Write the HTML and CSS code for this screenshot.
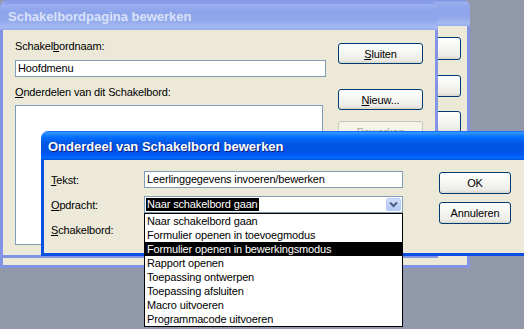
FILE: index.html
```html
<!DOCTYPE html>
<html lang="nl">
<head>
    <meta charset="UTF-8">
    <title>Schakelbordpagina bewerken</title>
    <link rel="stylesheet" href="styles.css">
</head>
<body>
    <!-- window behind, only its right edge shows -->
    <div class="window inactive window-back">
        <div class="titlebar"></div>
        <div class="client back-client">
            <button class="btn back-btn b1"></button>
            <button class="btn back-btn b2"></button>
            <button class="btn back-btn b3"></button>
        </div>
    </div>

    <div class="window inactive window-main">
        <div class="titlebar">Schakelbordpagina bewerken</div>
        <div class="client main-client">
            <div class="main-left">
                <label class="lbl name-lbl">Schakel<u>b</u>ordnaam:</label>
                <div class="textbox name-box">Hoofdmenu</div>
                <label class="lbl items-lbl"><u>O</u>nderdelen van dit Schakelbord:</label>
                <div class="listbox"></div>
            </div>
            <div class="main-buttons">
                <button class="btn btn-close"><u>S</u>luiten</button>
                <button class="btn btn-new"><u>N</u>ieuw...</button>
                <button class="btn btn-edit" disabled>Bewerken</button>
            </div>
        </div>
    </div>

    <div class="window active dialog">
        <div class="titlebar">Onderdeel van Schakelbord bewerken</div>
        <div class="client dialog-client">
            <div class="form">
                <div class="row">
                    <label class="row-lbl"><u>T</u>ekst:</label>
                    <div class="textbox field">Leerlinggegevens invoeren/bewerken</div>
                </div>
                <div class="row">
                    <label class="row-lbl"><u>O</u>pdracht:</label>
                    <div class="combo field">
                        <span class="combo-value">Naar schakelbord gaan</span>
                        <span class="combo-arrow">
                            <svg width="15" height="13" viewBox="0 0 15 13">
                                <path d="M4 4.5 L7.5 8 L11 4.5" fill="none" stroke="#4d6185" stroke-width="2"/>
                            </svg>
                        </span>
                        <ul class="dropdown">
                            <li>Naar schakelbord gaan</li>
                            <li>Formulier openen in toevoegmodus</li>
                            <li class="selected">Formulier openen in bewerkingsmodus</li>
                            <li>Rapport openen</li>
                            <li>Toepassing ontwerpen</li>
                            <li>Toepassing afsluiten</li>
                            <li>Macro uitvoeren</li>
                            <li>Programmacode uitvoeren</li>
                        </ul>
                    </div>
                </div>
                <div class="row row-board">
                    <label class="row-lbl"><u>S</u>chakelbord:</label>
                </div>
            </div>
            <div class="dialog-buttons">
                <button class="btn btn-ok">OK</button>
                <button class="btn btn-cancel">Annuleren</button>
            </div>
        </div>
    </div>
</body>
</html>
```

FILE: styles.css
```css
* {
    margin: 0;
    padding: 0;
    box-sizing: border-box;
}

body {
    width: 524px;
    height: 329px;
    overflow: hidden;
    position: relative;
    background: #9098aa;
    font-family: "Liberation Sans", Arial, sans-serif;
    font-size: 11px;
    letter-spacing: -0.15px;
    color: #000;
}

u {
    text-decoration: underline;
    text-underline-offset: 1px;
}

/* windows */
.window {
    position: absolute;
    display: flex;
    flex-direction: column;
}

.window-back {
    left: 0;
    top: 0;
    width: 470px;
    height: 268px;
}

.window-main {
    left: 0;
    top: 2px;
    width: 438px;
    height: 256px;
}

/* the dialog runs on past the right edge of the shot */
.dialog {
    left: 41px;
    top: 131px;
    width: 483px;
    height: 125px;
}

.titlebar {
    flex: none;
    border-radius: 7px 7px 0 0;
    font: bold 13px "Liberation Sans", Arial, sans-serif;
    letter-spacing: 0;
    line-height: 16px;
    white-space: nowrap;
    padding-left: 8px;
}

.inactive .titlebar {
    background: linear-gradient(#7d92e3 0%, #9aaeef 10%, #8ea4eb 35%, #91a8ec 65%, #a5b9f1 90%, #98abea 100%);
    color: #d8e2f8;
}

.active .titlebar {
    background: linear-gradient(#0058ee 0%, #3593ff 4%, #288eff 9%, #127dff 15%, #036bfe 23%, #0262ee 32%, #0057e5 42%, #0054e3 58%, #0055eb 76%, #005bf5 84%, #026afe 90%, #0062ef 95%, #0052d6 100%);
    color: #fff;
    text-shadow: 1px 1px #0a1e80;
}

.window-back .titlebar {
    height: 26px;
}

.window-main .titlebar {
    height: 28px;
    padding-top: 7px;
}

.dialog .titlebar {
    height: 29px;
    padding-top: 8px;
    padding-left: 7px;
    border-radius: 7px 0 0 0;
}

.client {
    flex: 1;
    background: #ece9d8;
    border: 3px solid;
    border-top: 0;
}

.inactive .client {
    border-color: #8294e3;
}

.active .client {
    border-color: #0a50e2;
}

.dialog .client {
    border-right: 0;
}

/* buttons */
.btn {
    display: block;
    font: inherit;
    letter-spacing: inherit;
    color: #000;
    border: 1px solid #003c74;
    border-radius: 3px;
    background: linear-gradient(#ffffff 0%, #f7f7f4 40%, #ecebe6 85%, #d8d4ca 100%);
    text-align: center;
}

.btn:disabled {
    border-color: #c9c7ba;
    background: #f5f4ea;
    color: #aca899;
}

/* back window */
.back-client {
    display: flex;
    flex-direction: column;
    align-items: flex-end;
    padding-right: 6px;
}

.back-btn {
    width: 85px;
    height: 22px;
}

.b1 {
    margin-top: 11px;
    height: 23px;
}

.b2 {
    margin-top: 15px;
}

.b3 {
    margin-top: 14px;
}

/* main window */
.main-client {
    display: flex;
    padding-left: 12px;
}

.main-left {
    width: 311px;
}

.lbl {
    display: block;
    line-height: 13px;
}

.name-lbl {
    margin-top: 10px;
}

.textbox {
    background: #fff;
    border: 1px solid #7f9db9;
    height: 17px;
    line-height: 15px;
    padding-left: 2px;
    white-space: nowrap;
}

.name-box {
    margin-top: 7px;
    width: 311px;
}

.items-lbl {
    margin-top: 9px;
}

.listbox {
    margin-top: 6px;
    width: 308px;
    height: 140px;
    background: #fff;
    border: 1px solid #7f9db9;
}

.main-buttons {
    margin-left: 12px;
}

.main-buttons .btn {
    width: 85px;
    height: 21px;
}

.btn-close {
    margin-top: 13px;
}

.btn-new {
    margin-top: 25px;
}

.btn-edit {
    margin-top: 11px;
}

/* dialog */
.dialog-client {
    display: flex;
    padding: 11px 0 0 7px;
}

.form {
    width: 352px;
}

.row {
    display: flex;
    align-items: center;
    height: 17px;
    margin-bottom: 8px;
}

.row-board {
    margin-top: 5px;
}

.row-lbl {
    width: 93px;
}

.field {
    width: 259px;
}

.combo {
    position: relative;
    display: flex;
    align-items: center;
    height: 17px;
    background: #fff;
    border: 1px solid #7f9db9;
    padding-left: 1px;
}

.combo-value {
    background: #000;
    color: #fff;
    line-height: 13px;
    padding: 0 1px;
}

.combo-arrow {
    margin-left: auto;
    margin-right: 1px;
    width: 15px;
    height: 13px;
    border: 1px solid #b9cbf3;
    border-radius: 2px;
    background: linear-gradient(#d2ddfa, #b4c7f6);
    display: flex;
}

.combo-arrow svg {
    margin: -1px;
}

.dropdown {
    position: absolute;
    left: -1px;
    top: 16px;
    width: 259px;
    height: 114px;
    list-style: none;
    background: #fff;
    border: 1px solid #000;
    z-index: 5;
}

.dropdown li {
    height: 14px;
    line-height: 14px;
    padding-left: 2px;
    white-space: nowrap;
}

.dropdown li.selected {
    background: #000;
    color: #fff;
}

.dialog-buttons {
    margin-left: 36px;
}

.dialog-buttons .btn {
    width: 72px;
    height: 22px;
}

.btn-ok {
    margin-top: 1px;
}

.btn-cancel {
    margin-top: 8px;
}
```
